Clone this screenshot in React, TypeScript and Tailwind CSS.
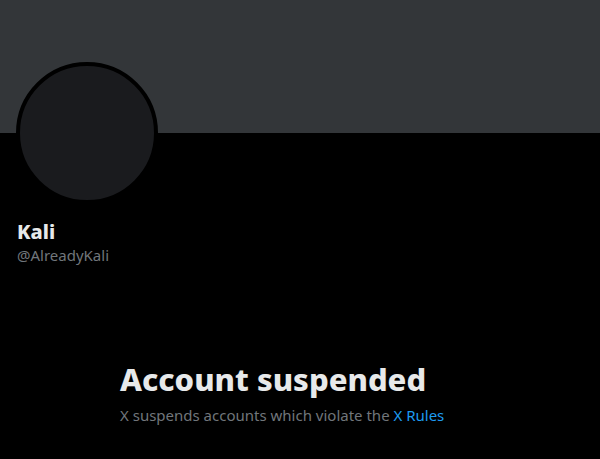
export default function App() {
  return (
    <div className="w-[600px] h-[459px] bg-black overflow-hidden" style={{ fontFamily: '"Noto Sans", "Open Sans", sans-serif' }}>
      <div className="h-[133px] bg-[#333639]" />
      <div className="px-4">
        <div className="-mt-[71px] w-[142px] h-[142px] rounded-full border-4 border-black bg-[#1a1b1e]" />
        <div className="mt-[15px] ml-[1px]">
          <div className="text-[20px] leading-[26px] font-extrabold text-[#e7e9ea]">Kali</div>
          <div className="text-[15px] leading-[20px] text-[#71767b]">@AlreadyKali</div>
        </div>
      </div>
      <div className="w-[360px] mx-auto mt-[96px]">
        <div className="text-[31px] leading-[36px] font-extrabold text-[#e7e9ea]">Account suspended</div>
        <div className="mt-[8px] text-[15px] leading-[20px] text-[#71767b]">
          X suspends accounts which violate the <span className="text-[#1d9bf0]">X Rules</span>
        </div>
      </div>
    </div>
  );
}
